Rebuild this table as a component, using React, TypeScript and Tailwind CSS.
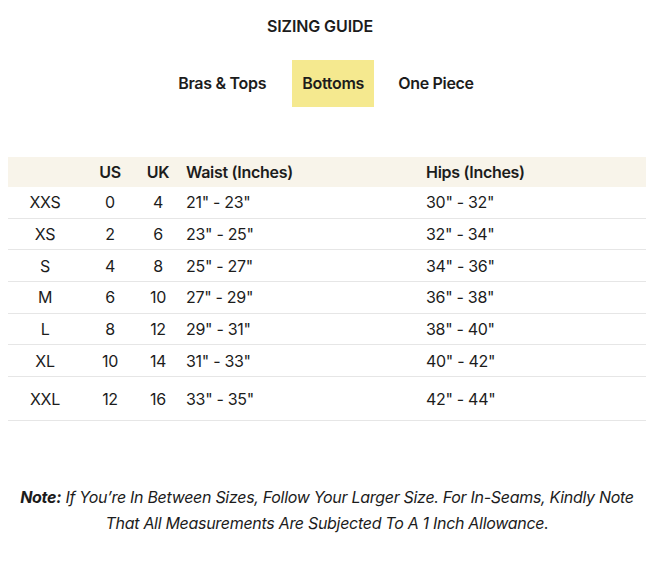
const rows = [
  { size: "XXS", us: "0", uk: "4", waist: "21\" - 23\"", hips: "30\" - 32\"" },
  { size: "XS", us: "2", uk: "6", waist: "23\" - 25\"", hips: "32\" - 34\"" },
  { size: "S", us: "4", uk: "8", waist: "25\" - 27\"", hips: "34\" - 36\"" },
  { size: "M", us: "6", uk: "10", waist: "27\" - 29\"", hips: "36\" - 38\"" },
  { size: "L", us: "8", uk: "12", waist: "29\" - 31\"", hips: "38\" - 40\"" },
  { size: "XL", us: "10", uk: "14", waist: "31\" - 33\"", hips: "40\" - 42\"" },
  { size: "XXL", us: "12", uk: "16", waist: "33\" - 35\"", hips: "42\" - 44\"" },
];

const cols = "grid grid-cols-[74px_56px_40px_240px_1fr] items-center";

export default function App() {
  return (
    <div className="w-[654px] h-[585px] bg-white text-[#1c1c1c] font-['Inter',sans-serif]">
      <h1 className="pt-[16px] text-center text-[16px] leading-[20px] font-semibold tracking-[-0.1px] pr-[14px]">
        SIZING GUIDE
      </h1>

      <div className="mt-[24px] flex justify-center items-center text-[16px] font-semibold tracking-[-0.3px] pr-[2px]">
        <button className="px-[12px] h-[47px] pb-[2px]">Bras &amp; Tops</button>
        <button className="ml-[14px] w-[82px] h-[47px] pb-[2px] bg-[#f5e98f]">Bottoms</button>
        <button className="ml-[12px] px-[12px] h-[47px] pb-[2px]">One Piece</button>
      </div>

      <div className="mt-[50px] mx-[8px] text-[16px] tracking-[-0.3px]">
        <div className={`${cols} h-[30px] bg-[#f8f4ea] font-semibold`}>
          <span />
          <span className="text-center">US</span>
          <span className="text-center">UK</span>
          <span className="pl-[8px]">Waist (Inches)</span>
          <span className="pl-[8px]">Hips (Inches)</span>
        </div>
        {rows.map((r, i) => (
          <div
            key={r.size}
            className={`${cols} border-b border-[#e6e6e6] ${i === rows.length - 1 ? "h-[44px]" : "h-[31.7px]"}`}
          >
            <span className="text-center">{r.size}</span>
            <span className="text-center">{r.us}</span>
            <span className="text-center">{r.uk}</span>
            <span className="pl-[8px]">{r.waist}</span>
            <span className="pl-[8px]">{r.hips}</span>
          </div>
        ))}
      </div>

      <p className="mt-[63px] px-[20px] text-center italic text-[16px] leading-[26px] tracking-[-0.3px]">
        <b className="font-bold">Note:</b> If You’re In Between Sizes, Follow Your Larger Size. For In-Seams, Kindly Note That All Measurements Are Subjected To A 1 Inch Allowance.
      </p>
    </div>
  );
}
